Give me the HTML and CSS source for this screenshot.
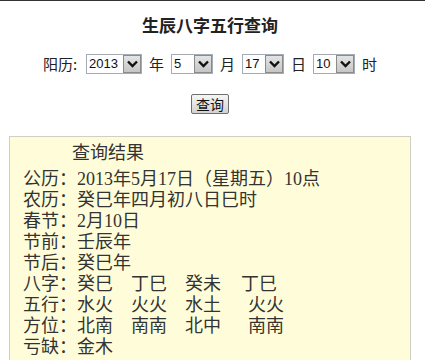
FILE: index.html
```html
<!DOCTYPE html>
<html lang="zh-CN">
<head>
<meta charset="utf-8">
<title>生辰八字五行查询</title>
<link rel="stylesheet" href="styles.css">
</head>
<body>
<div class="page">
  <h1 class="title">生辰八字五行查询</h1>
  <form class="query-row">
    <span class="label">阳历:</span>
    <span class="sel sel-year"><span class="sel-value">2013</span><span class="sel-btn"><svg width="11" height="8" viewBox="0 0 11 8"><path d="M1 1.5 L5.5 6 L10 1.5" fill="none" stroke="#111" stroke-width="2.4"/></svg></span></span>
    <span class="unit">年</span>
    <span class="sel"><span class="sel-value">5</span><span class="sel-btn"><svg width="11" height="8" viewBox="0 0 11 8"><path d="M1 1.5 L5.5 6 L10 1.5" fill="none" stroke="#111" stroke-width="2.4"/></svg></span></span>
    <span class="unit">月</span>
    <span class="sel"><span class="sel-value">17</span><span class="sel-btn"><svg width="11" height="8" viewBox="0 0 11 8"><path d="M1 1.5 L5.5 6 L10 1.5" fill="none" stroke="#111" stroke-width="2.4"/></svg></span></span>
    <span class="unit">日</span>
    <span class="sel"><span class="sel-value">10</span><span class="sel-btn"><svg width="11" height="8" viewBox="0 0 11 8"><path d="M1 1.5 L5.5 6 L10 1.5" fill="none" stroke="#111" stroke-width="2.4"/></svg></span></span>
    <span class="unit">时</span>
  </form>
  <div class="actions"><button type="button" class="btn">查询</button></div>
  <div class="result">
    <div class="result-title">查询结果</div>
    <div class="line">公历：2013年5月17日（星期五）10点</div>
    <div class="line">农历：癸巳年四月初八日巳时</div>
    <div class="line">春节：2月10日</div>
    <div class="line">节前：壬辰年</div>
    <div class="line">节后：癸巳年</div>
    <div class="line">八字：<span class="col">癸巳</span><span class="col">丁巳</span><span class="col">癸未</span><span class="last">丁巳</span></div>
    <div class="line">五行：<span class="col">水火</span><span class="col">火火</span><span class="col">水土</span><span class="last wide">火火</span></div>
    <div class="line">方位：<span class="col">北南</span><span class="col">南南</span><span class="col">北中</span><span class="last wide">南南</span></div>
    <div class="line">亏缺：金木</div>
    <div class="line">&nbsp;</div>
  </div>
</div>
</body>
</html>
```
FILE: styles.css
```css
html, body {
  margin: 0;
  padding: 0;
  background: #fff;
}
body {
  border-top: 1px solid #333;
  font-family: "Noto Sans CJK SC", "Liberation Sans", sans-serif;
  color: #222;
  overflow: hidden;
}
.page {
  width: 420px;
}
.title {
  margin: 14px 0 0;
  font-size: 17px;
  line-height: 20px;
  font-weight: bold;
  text-align: center;
  color: #222;
}
.query-row {
  margin: 19px 0 0;
  height: 20px;
  display: flex;
  justify-content: center;
  align-items: center;
  font-size: 15px;
  color: #222;
}
.label {
  display: inline-block;
  width: 35px;
  margin-right: 8px;
  line-height: 20px;
}
.unit {
  display: inline-block;
  width: 15px;
  margin: 0 7px;
  line-height: 20px;
}
.unit:last-child {
  margin-right: 0;
}
.sel {
  box-sizing: border-box;
  width: 42px;
  height: 20px;
  border: 1px solid #a5acb5;
  background: #fff;
  display: flex;
  align-items: center;
  justify-content: space-between;
}
.sel-year {
  width: 56px;
}
.sel-value {
  font-family: "Liberation Sans", sans-serif;
  font-size: 13px;
  color: #111;
  padding-left: 2px;
  line-height: 18px;
}
.sel-btn {
  box-sizing: border-box;
  width: 18px;
  height: 18px;
  border: 1px solid #8b8b8b;
  background: linear-gradient(#e4e4e4, #c6c6c6);
  display: flex;
  align-items: center;
  justify-content: center;
}
.actions {
  margin-top: 20px;
  display: flex;
  justify-content: center;
}
.btn {
  box-sizing: border-box;
  width: 38px;
  height: 20px;
  padding: 0;
  border: 1px solid #6f6f6f;
  border-radius: 2px;
  background: linear-gradient(#f6f6f6, #d2d2d2);
  font-family: "Noto Sans CJK SC", sans-serif;
  font-size: 14px;
  line-height: 18px;
  color: #111;
}
.result {
  box-sizing: border-box;
  margin: 22px 0 0 9px;
  width: 402px;
  border: 1px solid #cfcfc4;
  background: #fffdd9;
  padding: 6px 0 0 13px;
  font-family: "Liberation Serif", "Noto Sans CJK SC", serif;
  font-size: 18px;
  line-height: 21px;
  color: #333;
}
.result-title {
  padding-left: 49px;
  margin-bottom: 5px;
}
.line {
  white-space: nowrap;
}
.col {
  display: inline-block;
  width: 54px;
}
.last {
  display: inline-block;
  margin-left: 2px;
}
.last.wide {
  margin-left: 9px;
}
```
